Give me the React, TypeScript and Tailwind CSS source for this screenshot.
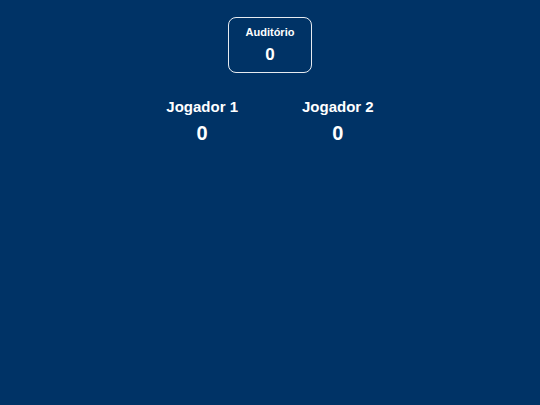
export default function App() {
  const players = [
    { name: "Jogador 1", score: 0 },
    { name: "Jogador 2", score: 0 },
  ];

  return (
    <div
      className="min-h-screen w-full bg-[#003366] text-white flex flex-col items-center pt-[17px]"
      style={{ fontFamily: '"Liberation Sans", Arial, sans-serif' }}
    >
      <div className="w-[84px] h-[56px] rounded-lg border border-white/90 flex flex-col items-center justify-center">
        <span className="text-[11px] font-bold leading-none">Auditório</span>
        <span className="text-[17px] font-bold leading-none mt-[8px]">0</span>
      </div>

      <div className="flex gap-[64px] mt-[26px]">
        {players.map((p) => (
          <div key={p.name} className="flex flex-col items-center">
            <span className="text-[15px] font-bold leading-none">{p.name}</span>
            <span className="text-[20px] font-bold leading-none mt-[9px]">{p.score}</span>
          </div>
        ))}
      </div>
    </div>
  );
}
